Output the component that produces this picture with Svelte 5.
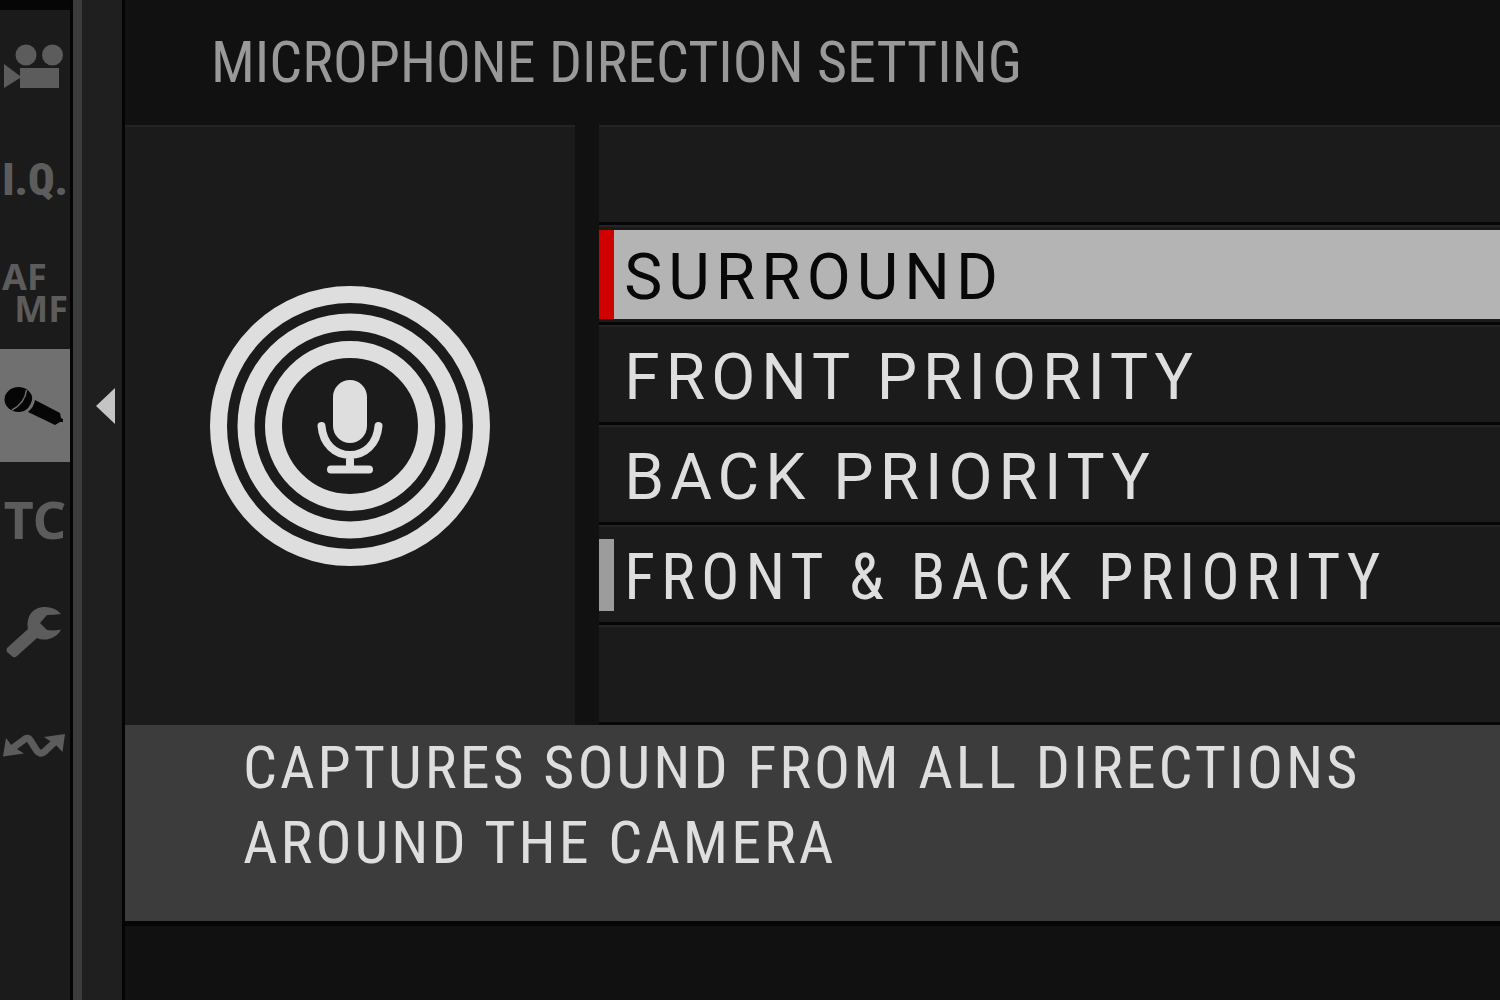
<script>
  const tabs = [
    { id: 'movie', label: 'Movie setting' },
    { id: 'iq', label: 'Image quality' },
    { id: 'af', label: 'AF/MF setting' },
    { id: 'audio', label: 'Audio setting' },
    { id: 'tc', label: 'Time code' },
    { id: 'setup', label: 'Set up' },
    { id: 'network', label: 'Network' }
  ];

  const options = [
    { id: 'surround', label: 'SURROUND' },
    { id: 'front', label: 'FRONT PRIORITY' },
    { id: 'back', label: 'BACK PRIORITY' },
    { id: 'both', label: 'FRONT & BACK PRIORITY', narrow: true }
  ];

  let activeTab = $state('audio');
  let cursor = $state('surround');
  let saved = $state('both');
</script>

<div class="screen">
  <nav class="rail" aria-label="Menu">
    {#each tabs as tab (tab.id)}
      <button
        class="tab"
        class:active={tab.id === activeTab}
        aria-label={tab.label}
        onclick={() => (activeTab = tab.id)}
      >
        {#if tab.id === 'movie'}
          <svg viewBox="0 0 70 113">
            <circle cx="26" cy="45" r="10.5" />
            <circle cx="52.5" cy="45" r="10.5" />
            <path d="M20 58H59V78H20V68L4 78V54L20 66Z" />
          </svg>
        {:else if tab.id === 'iq'}
          <span class="iq">I.Q.</span>
        {:else if tab.id === 'af'}
          <span class="af"><span>AF</span><span class="mf">MF</span></span>
        {:else if tab.id === 'audio'}
          <svg viewBox="0 0 70 113">
            <ellipse cx="18.5" cy="50.5" rx="14" ry="12.5" />
            <path d="M35 51L60 64L61 69L63 70V73L60 73L55 76L28 63Q34 58 35 51Z" />
            <path class="seam" d="M26.5 41Q25 54 12 61M33.5 46Q33 57 25 63" />
          </svg>
        {:else if tab.id === 'tc'}
          <span class="tc">TC</span>
        {:else if tab.id === 'setup'}
          <svg viewBox="0 0 70 113">
            <path d="M61 39Q55 32 45 32C32 32 26 42 28 54L7 73Q6 75 7 77L13 82Q15 83 17 81L37 63C46 67 57 63 61 54.5Q54 56 47 55L40 48L47 40Q54 40 61 39Z" />
          </svg>
        {:else}
          <svg viewBox="0 0 70 113">
            <path class="zigzag" d="M10 62L25 51Q28 49 30 52L37 63Q40 67 44 64L58 51" />
            <path d="M3 68.5L6 50L12 58L24 65.5ZM65 46L62.5 64L56 57L44 49Z" />
          </svg>
        {/if}
      </button>
    {/each}
  </nav>

  <div class="gutter">
    <button class="back" aria-label="Back">
      <svg viewBox="0 0 20 36"><path d="M0 18L19 0V36Z" /></svg>
    </button>
  </div>

  <main class="page">
    <h1>MICROPHONE DIRECTION SETTING</h1>

    <div class="body">
      <div class="preview">
        <svg viewBox="-140 -140 280 280" role="img" aria-label="Surround microphone">
          <circle class="ring" r="131.5" />
          <circle class="ring" r="104" />
          <circle class="ring" r="76.5" />
          <rect x="-17" y="-46" width="34" height="63" rx="17" />
          <path class="stand" d="M-28.5 0C-27 18 -15 29 0 29S27 18 28.5 0M0 29V43M-19 43.5H19" />
        </svg>
      </div>

      <ul class="list">
        <li class="row"></li>
        {#each options as option (option.id)}
          <li class="row">
            <button
              class="option"
              class:cursor={option.id === cursor}
              class:saved={option.id === saved}
              class:narrow={option.narrow}
              onfocus={() => (cursor = option.id)}
              onclick={() => (saved = option.id)}
            >
              <span class="mark"></span>
              <span class="label">{option.label}</span>
            </button>
          </li>
        {/each}
        <li class="row"></li>
      </ul>
    </div>

    <p class="help">
      CAPTURES SOUND FROM ALL DIRECTIONS<br />
      AROUND THE CAMERA
    </p>
  </main>
</div>

<style>
  :global(body) {
    margin: 0;
    background: #111;
  }

  .screen {
    --sans: Roboto, "Liberation Sans", sans-serif;
    --narrow: "Roboto Condensed", Roboto, "Liberation Sans", sans-serif;
    display: grid;
    grid-template-columns: 70px 49px 1fr;
    column-gap: 3px;
    min-height: 100vh;
    background: #040404;
    color: #dedede;
    font-family: var(--sans);
  }

  button {
    margin: 0;
    padding: 0;
    border: 0;
    background: none;
    color: inherit;
    font: inherit;
    cursor: pointer;
  }

  .rail {
    display: flex;
    flex-direction: column;
    border-top: 10px solid #060606;
    background: #1b1b1b;
    color: #5c5c5c;
  }

  .tab {
    display: flex;
    align-items: center;
    justify-content: center;
    height: 113px;
    font-family: "Noto Sans", "Open Sans", sans-serif;
    font-weight: 700;
  }

  .tab.active {
    background: #707070;
    color: #060606;
  }

  .tab svg {
    width: 70px;
    height: 113px;
    fill: currentColor;
  }

  .tab .seam {
    fill: none;
    stroke: #707070;
    stroke-width: 1.5;
  }

  .tab .zigzag {
    fill: none;
    stroke: currentColor;
    stroke-width: 7;
  }

  .iq {
    font-family: var(--narrow);
    font-size: 44px;
    font-weight: 900;
  }

  .tc {
    font-size: 52px;
  }

  .af {
    display: flex;
    flex-direction: column;
    width: 66px;
    font-size: 36px;
    line-height: 32px;
    text-align: left;
  }

  .mf {
    align-self: flex-end;
  }

  .gutter {
    border-left: 9px solid #3c3c3c;
    background: #1f1f1f;
  }

  .back {
    display: block;
    margin: 388px 6px 0 auto;
  }

  .back svg {
    display: block;
    width: 20px;
    height: 36px;
    fill: #c4c4c4;
  }

  .page {
    background: #111;
  }

  h1 {
    margin: 0;
    padding: 0 86px;
    color: #999;
    font-family: var(--narrow);
    font-size: 58px;
    font-weight: 400;
    line-height: 125px;
    white-space: nowrap;
  }

  .body {
    display: grid;
    grid-template-columns: 1fr 2fr;
    column-gap: 24px;
  }

  .preview {
    display: flex;
    align-items: center;
    justify-content: center;
    border-top: 2px solid #242424;
    background: #1b1b1b;
  }

  .preview svg {
    width: 280px;
    height: 280px;
    fill: #dedede;
  }

  .preview .ring {
    fill: none;
    stroke: #dedede;
    stroke-width: 17;
  }

  .preview .stand {
    fill: none;
    stroke: #dedede;
    stroke-width: 8;
    stroke-linecap: round;
  }

  .list {
    margin: 0;
    padding: 0;
    list-style: none;
  }

  .row {
    box-sizing: border-box;
    height: 100px;
    border-top: 2px solid #242424;
    border-bottom: 3px solid #060606;
    background: #1b1b1b;
  }

  .option {
    display: flex;
    align-items: center;
    gap: 10px;
    width: 100%;
    height: 95px;
    font-size: 64px;
    line-height: 72px;
    letter-spacing: 6px;
    text-align: left;
    white-space: nowrap;
  }

  .option:focus {
    outline: none;
  }

  .option.narrow {
    font-family: var(--narrow);
  }

  .mark {
    width: 15px;
    height: 72px;
  }

  .label {
    padding-top: 6px;
  }

  .saved .mark {
    background: #9c9c9c;
  }

  .option.cursor {
    height: 89px;
    margin-top: 3px;
    background: #b4b4b4;
    color: #080808;
  }

  .cursor .mark {
    height: 100%;
    background: #ce0000;
  }

  .help {
    margin: 0;
    padding: 5px 118px 41px;
    border-bottom: 5px solid #060606;
    background: #3c3c3c;
    font-family: var(--narrow);
    font-size: 60px;
    line-height: 75px;
    letter-spacing: 3px;
    white-space: nowrap;
  }
</style>
